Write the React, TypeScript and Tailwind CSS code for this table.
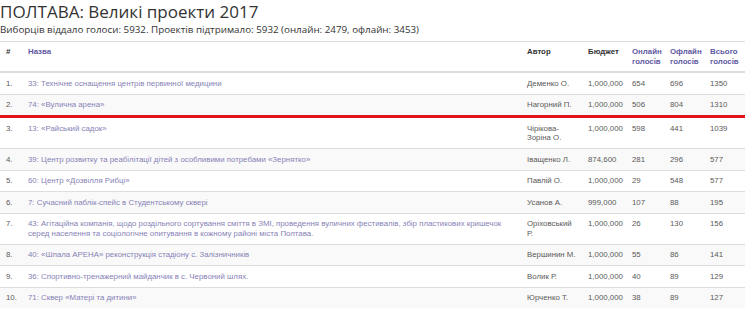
const rows = [
  { n: "1.", name: "33: Технічне оснащення центрів первинної медицини", author: "Деменко О.", budget: "1,000,000", on: "654", off: "696", total: "1350" },
  { n: "2.", name: "74: «Вулична арена»", author: "Нагорний П.", budget: "1,000,000", on: "506", off: "804", total: "1310", mark: true },
  { n: "3.", name: "13: «Райський садок»", author: "Чірікова-Зоріна О.", budget: "1,000,000", on: "598", off: "441", total: "1039" },
  { n: "4.", name: "39: Центр розвитку та реабілітації дітей з особливими потребами «Зернятко»", author: "Іващенко Л.", budget: "874,600", on: "281", off: "296", total: "577" },
  { n: "5.", name: "60: Центр «Дозвілля Рибці»", author: "Павлій О.", budget: "1,000,000", on: "29", off: "548", total: "577" },
  { n: "6.", name: "7: Сучасний паблік-спейс в Студентському сквері", author: "Усанов А.", budget: "999,000", on: "107", off: "88", total: "195" },
  { n: "7.", name: "43: Агітаційна компанія, щодо роздільного сортування сміття в ЗМІ, проведення вуличних фестивалів, збір пластикових кришечок серед населення та соціологічне опитування в кожному районі міста Полтава.", author: "Оріховський Р.", budget: "1,000,000", on: "26", off: "130", total: "156" },
  { n: "8.", name: "40: «Шпала АРЕНА» реконструкція стадіону с. Залізничників", author: "Вершинин М.", budget: "1,000,000", on: "55", off: "86", total: "141" },
  { n: "9.", name: "36: Спортивно-тренажерний майданчик в с. Червоний шлях.", author: "Волик Р.", budget: "1,000,000", on: "40", off: "89", total: "129" },
  { n: "10.", name: "71: Сквер «Матері та дитини»", author: "Юрченко Т.", budget: "1,000,000", on: "38", off: "89", total: "127" },
];

const td = "px-[6px] py-[5.5px] align-top border-t border-[#ddd]";
const th = "px-[6px] py-[5px] align-top border-t border-b-2 border-[#ddd] font-semibold";

export default function App() {
  return (
    <div className="w-[745px] h-[309px] overflow-hidden bg-white text-[#333]">
      <h1 className="font-['Open_Sans',sans-serif] text-[17px] leading-[22px] pt-[1px]">
        ПОЛТАВА: Великі проекти 2017
      </h1>
      <p className="font-['Open_Sans',sans-serif] text-[9.8px] leading-[14px] mb-[4px]">
        Виборців віддало голоси: 5932. Проектів підтримало: 5932 (онлайн: 2479, офлайн: 3453)
      </p>
      <table className="w-full table-fixed border-collapse font-['Liberation_Sans',Arial,sans-serif] text-[7.85px] leading-[9.5px]">
        <thead>
          <tr className="text-left">
            <th className={`${th} w-[22px]`}>#</th>
            <th className={`${th} text-[#5f5aa2]`}>Назва</th>
            <th className={`${th} w-[61px]`}>Автор</th>
            <th className={`${th} w-[44px]`}>Бюджет</th>
            <th className={`${th} w-[38px] text-[#5f5aa2]`}>Онлайн голосів</th>
            <th className={`${th} w-[40px] text-[#5f5aa2]`}>Офлайн голосів</th>
            <th className={`${th} w-[41px] text-[#5f5aa2]`}>Всього голосів</th>
          </tr>
        </thead>
        <tbody className="text-[#5a5a5a]">
          {rows.map((r, i) => (
            <tr key={r.n} className={`${i % 2 === 1 ? "bg-[#f9f9f9]" : ""} ${r.mark ? "border-b-[3px] border-b-[#e2131b]" : ""}`}>
              <td className={td}>{r.n}</td>
              <td className={`${td} text-[#8782b6]`}>{r.name}</td>
              <td className={td}>{r.author}</td>
              <td className={td}>{r.budget}</td>
              <td className={td}>{r.on}</td>
              <td className={td}>{r.off}</td>
              <td className={td}>{r.total}</td>
            </tr>
          ))}
        </tbody>
      </table>
    </div>
  );
}
